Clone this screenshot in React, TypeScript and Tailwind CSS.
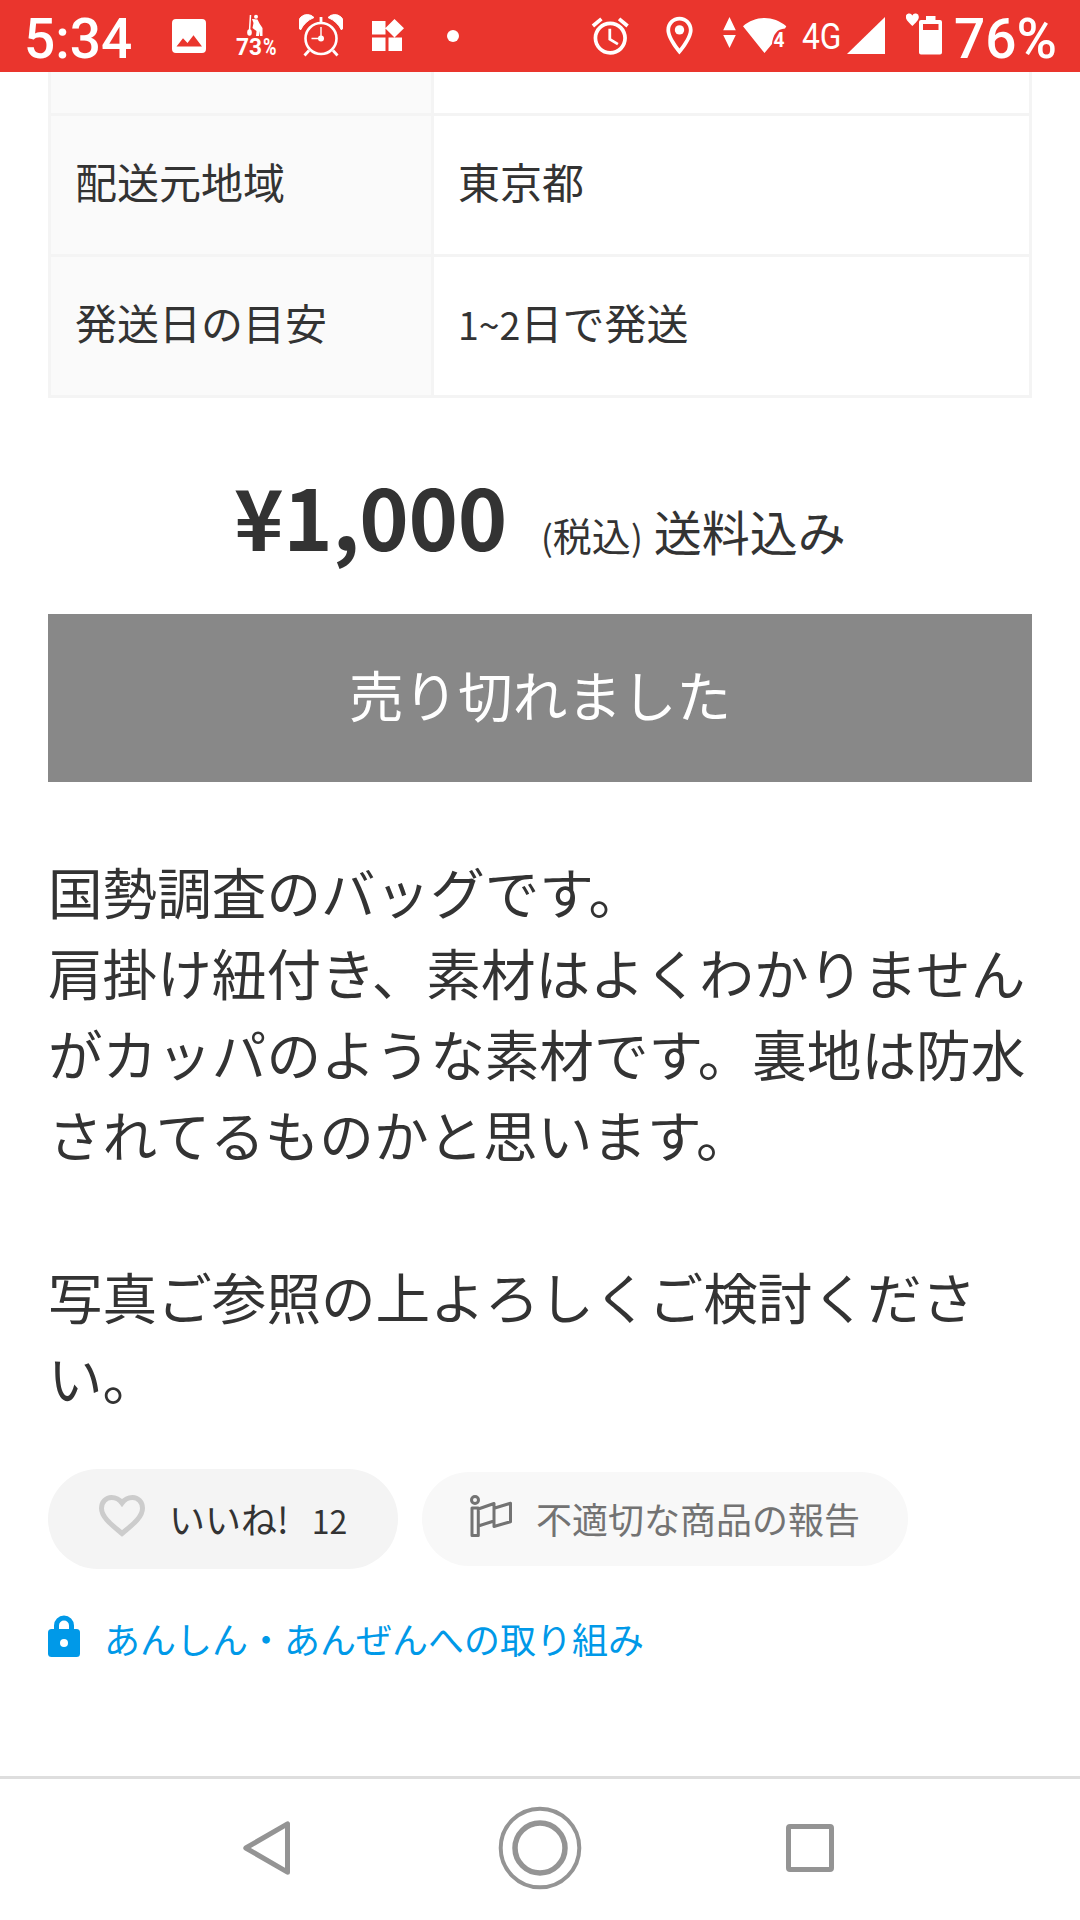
import React from "react";
import { MdAlarm, MdOutlineLocationOn } from "react-icons/md";

function StatusBar() {
  return (
    <header className="flex h-[72px] w-full shrink-0 overflow-hidden bg-[#ea352d] font-[Roboto,sans-serif] text-white">
      <span className="ml-[24px] w-[109px] whitespace-nowrap text-[55px] font-medium leading-[79px]">5:34</span>

      <svg className="ml-[39px] h-[72px] w-[34px] shrink-0" viewBox="172 0 34 72" fill="currentColor">
        <path fillRule="evenodd" d="M176 19h26a4 4 0 0 1 4 4v26a4 4 0 0 1-4 4h-26a4 4 0 0 1-4-4V23a4 4 0 0 1 4-4zM176.500 46.500h25.500l-8.500-11.200-6 7.700-4.500-4.800z" />
      </svg>

      <svg className="ml-[29px] h-[72px] w-[44px] shrink-0 overflow-visible" viewBox="235 0 44 72" fill="white">
        <circle cx="256" cy="16.800" r="2" />
        <path d="M252 19l5.500.5 2 4 3 4.500v8h-2.500v-5l-1 5h-3l.5-5-4-3 1-5z" />
        <path d="M250.500 15l-1 16" fill="none" stroke="white" strokeWidth="1.500" />
        <ellipse cx="249.500" cy="32.500" rx="2.300" ry="3.200" />
        <text y="54.500" fontFamily="Roboto" fontSize="24" fontWeight="700">
          <tspan x="236" textLength="26" lengthAdjust="spacingAndGlyphs">73</tspan>
          <tspan x="263" textLength="13.500" lengthAdjust="spacingAndGlyphs">%</tspan>
        </text>
      </svg>

      <svg className="ml-[20px] h-[72px] w-[44px] shrink-0" viewBox="299 0 44 72" fill="none" stroke="white">
        <circle cx="321" cy="38.500" r="15.500" strokeWidth="2.600" />
        <path d="M321 17v6M309 50.500l-4.500 5M333 50.500l4.500 5" strokeWidth="2.800" />
        <path d="M321 27v11.500h-9.500" strokeWidth="1.400" />
        <circle cx="321" cy="38.500" r="3" fill="white" stroke="none" />
        <path d="M300.500 30a8.800 8.800 0 0 1 13.500-12.500 26 26 0 0 0-13.500 12.500zM341.500 30a8.800 8.800 0 0 0-13.500-12.500 26 26 0 0 1 13.500 12.500z" fill="white" strokeWidth="1" />
      </svg>

      <svg className="ml-[29px] h-[72px] w-[32px] shrink-0" viewBox="372 0 32 72" fill="white">
        <path d="M372 21h13.500v13.500H372zM372 37.500h13.500V51H372zM388.500 37.500H402V51h-13.500zM394.500 19l9.500 9.300-9.500 9.300-9.300-9.300z" />
      </svg>

      <span className="ml-[43px] mt-[30px] size-[12px] shrink-0 rounded-full bg-white" />

      <MdAlarm className="ml-[129px] mt-[14px] size-[44.500px] shrink-0" />
      <MdOutlineLocationOn className="ml-[24px] mt-[13px] size-[45px] shrink-0" />

      <svg className="ml-[21.500px] h-[72px] w-[66px] shrink-0" viewBox="723 0 66 72" fill="white">
        <path d="M729.500 17l6.300 13.200h-12.600zM729.500 48l6.300-13h-12.600z" />
        <path d="M743 26.300c12.500-11 30.500-11 43.300 0L785 28.500c-8 .5-12 6-13 15.500L764.500 53z" />
        <text x="773.500" y="47" fontFamily="Roboto" fontSize="20.500" fontWeight="700" stroke="#ea352d" strokeWidth="2.500" paintOrder="stroke" textLength="11" lengthAdjust="spacingAndGlyphs">4</text>
      </svg>

      <svg className="ml-[13px] h-[72px] w-[40px] shrink-0 overflow-visible" viewBox="802 0 40 72" fill="white">
        <text x="802" y="48.800" fontFamily="Roboto" fontSize="36.500" textLength="39.500" lengthAdjust="spacingAndGlyphs">4G</text>
      </svg>

      <svg className="ml-[5px] h-[72px] w-[38px] shrink-0" viewBox="847 0 38 72" fill="white">
        <path d="M885 17v37h-38z" />
      </svg>

      <svg className="ml-[21px] h-[72px] w-[37px] shrink-0" viewBox="906 0 37 72" fill="white">
        <path d="M912.300 26c-3-3-6.500-5.800-6.500-9a3.400 3.400 0 0 1 6.500-1.500 3.400 3.400 0 0 1 6.500 1.500c0 3.200-3.500 6-6.500 9z" />
        <path fillRule="evenodd" d="M926 16h9.500v4h4.500a2 2 0 0 1 2 2v30.500a2 2 0 0 1-2 2h-19a2 2 0 0 1-2-2V22a2 2 0 0 1 2-2h5zM923 24v6h15.500v-6z" />
      </svg>

      <span className="ml-[11px] whitespace-nowrap text-[55px] font-medium leading-[79px]">76%</span>
    </header>
  );
}

function InfoRow({ label, children }: { label: string; children: React.ReactNode }) {
  return (
    <div className="flex h-[141px] border-b-[3px] border-[#f4f4f4] text-[42px] leading-[60px]">
      <div className="flex w-[383px] items-center border-r-[3px] border-[#f4f4f4] bg-[#fafafa] pb-[8px] pl-[24px]">{label}</div>
      <div className="flex flex-1 items-baseline pl-[24px] pt-[35px]">{children}</div>
    </div>
  );
}

function NavBar() {
  return (
    <nav className="flex h-[144px] shrink-0 items-center border-t-[3px] border-[#dedede] pb-[4px] text-[#949494]">
      <svg className="ml-[243px] h-[54px] w-[47px]" viewBox="0 0 47 54" fill="none" stroke="currentColor" strokeWidth="5" strokeLinejoin="round">
        <path d="M44.500 2.800v48.400L2.800 27z" />
      </svg>
      <svg className="ml-[208px] size-[84px]" viewBox="0 0 84 84" fill="none" stroke="currentColor">
        <circle cx="42" cy="42" r="39.300" strokeWidth="4" />
        <circle cx="42" cy="42" r="25" strokeWidth="5.500" />
      </svg>
      <span className="ml-[204px] size-[48px] rounded-[4px] border-[5px] border-current" />
    </nav>
  );
}

export default function App() {
  return (
    <div
      lang="ja"
      className="flex h-[1920px] w-[1080px] flex-col overflow-hidden bg-white font-['Noto_Sans_CJK_JP',sans-serif] text-[#333333]"
    >
      <StatusBar />
      <main className="flex flex-1 flex-col px-[48px]">
        <section className="border-x-[3px] border-[#f4f4f4]">
          <div className="flex h-[44px] border-b-[3px] border-[#f4f4f4]">
            <div className="w-[383px] border-r-[3px] border-[#f4f4f4] bg-[#fafafa]" />
          </div>
          <InfoRow label="配送元地域">東京都</InfoRow>
          <InfoRow label="発送日の目安">
            <span className="text-[37.500px]">1~2</span>日で発送
          </InfoRow>
        </section>

        <div className="mt-[56px] flex h-[160px] items-baseline whitespace-nowrap pl-[186px]">
          <span className="text-[84px] font-bold leading-[122px] tracking-[-0.350px]">¥1,000</span>
          <span className="ml-[34px] text-[39px]">
            <span className="text-[35px]">(</span>税込<span className="text-[35px]">)</span>
          </span>
          <span className="ml-[11px] text-[48px]">送料込み</span>
        </div>

        <button className="h-[168px] w-full bg-[#888888] pb-[9px] text-[54.600px] leading-[81px] text-white">売り切れました</button>

        <p className="mt-[68px] whitespace-nowrap text-[54.600px] leading-[81px]">
          国勢調査のバッグです。
          <br />
          肩掛け紐付き、素材はよくわかりません
          <br />
          がカッパのような素材です。裏地は防水
          <br />
          されてるものかと思います。
          <br />
          <br />
          写真ご参照の上よろしくご検討くださ
          <br />
          い。
        </p>

        <div className="mt-[52px] flex items-center gap-[24px] text-[36px]">
          <button className="flex h-[100px] w-[350px] items-center rounded-full bg-[#f4f4f4] pl-[51px]">
            <svg className="mb-[7px] h-[42px] w-[46px]" viewBox="0 0 46 42" fill="none" stroke="#cccccc" strokeWidth="5">
              <path d="M23 38.500C15 31.500 2.500 23 2.500 13.200 2.500 7 7 2.500 12.500 2.500c4.500 0 8 2 10.500 5.500 2.500-3.500 6-5.500 10.500-5.500 5.500 0 10 4.500 10 10.700C43.500 23 31 31.500 23 38.500z" />
            </svg>
            <span className="ml-[24px] pb-[3px]">
              いいね!<span className="ml-[23px] text-[32px]">12</span>
            </span>
          </button>
          <button className="flex h-[94px] w-[486px] items-center rounded-full bg-[#f8f8f8] pl-[48px] text-[#737373]">
            <svg className="mb-[6px] h-[42px] w-[42px]" viewBox="0 0 42 42" fill="none" stroke="currentColor" strokeWidth="3" strokeLinejoin="round">
              <circle cx="5" cy="5" r="3.500" />
              <path d="M2 13h6.300v27.500H2zM8.300 14L24 8.500v17.500L8.300 31zM24 13.200l16.500-5v18.500L24 31.500V26" />
            </svg>
            <span className="ml-[24px] pb-[2px]">不適切な商品の報告</span>
          </button>
        </div>

        <a className="mt-[42px] flex items-center text-[36px] leading-[54px] text-[#0099e8]">
          <svg className="mb-[4px] h-[42px] w-[32px]" viewBox="0 0 32 42" fill="none">
            <path d="M8.500 16v-5.500a7.500 7.500 0 0 1 15 0V16" stroke="currentColor" strokeWidth="5" />
            <rect y="14" width="32" height="28" rx="3.500" fill="currentColor" />
            <circle cx="16" cy="28" r="4" fill="white" />
          </svg>
          <span className="ml-[24px]">あんしん・あんぜんへの取り組み</span>
        </a>
      </main>
      <NavBar />
    </div>
  );
}
